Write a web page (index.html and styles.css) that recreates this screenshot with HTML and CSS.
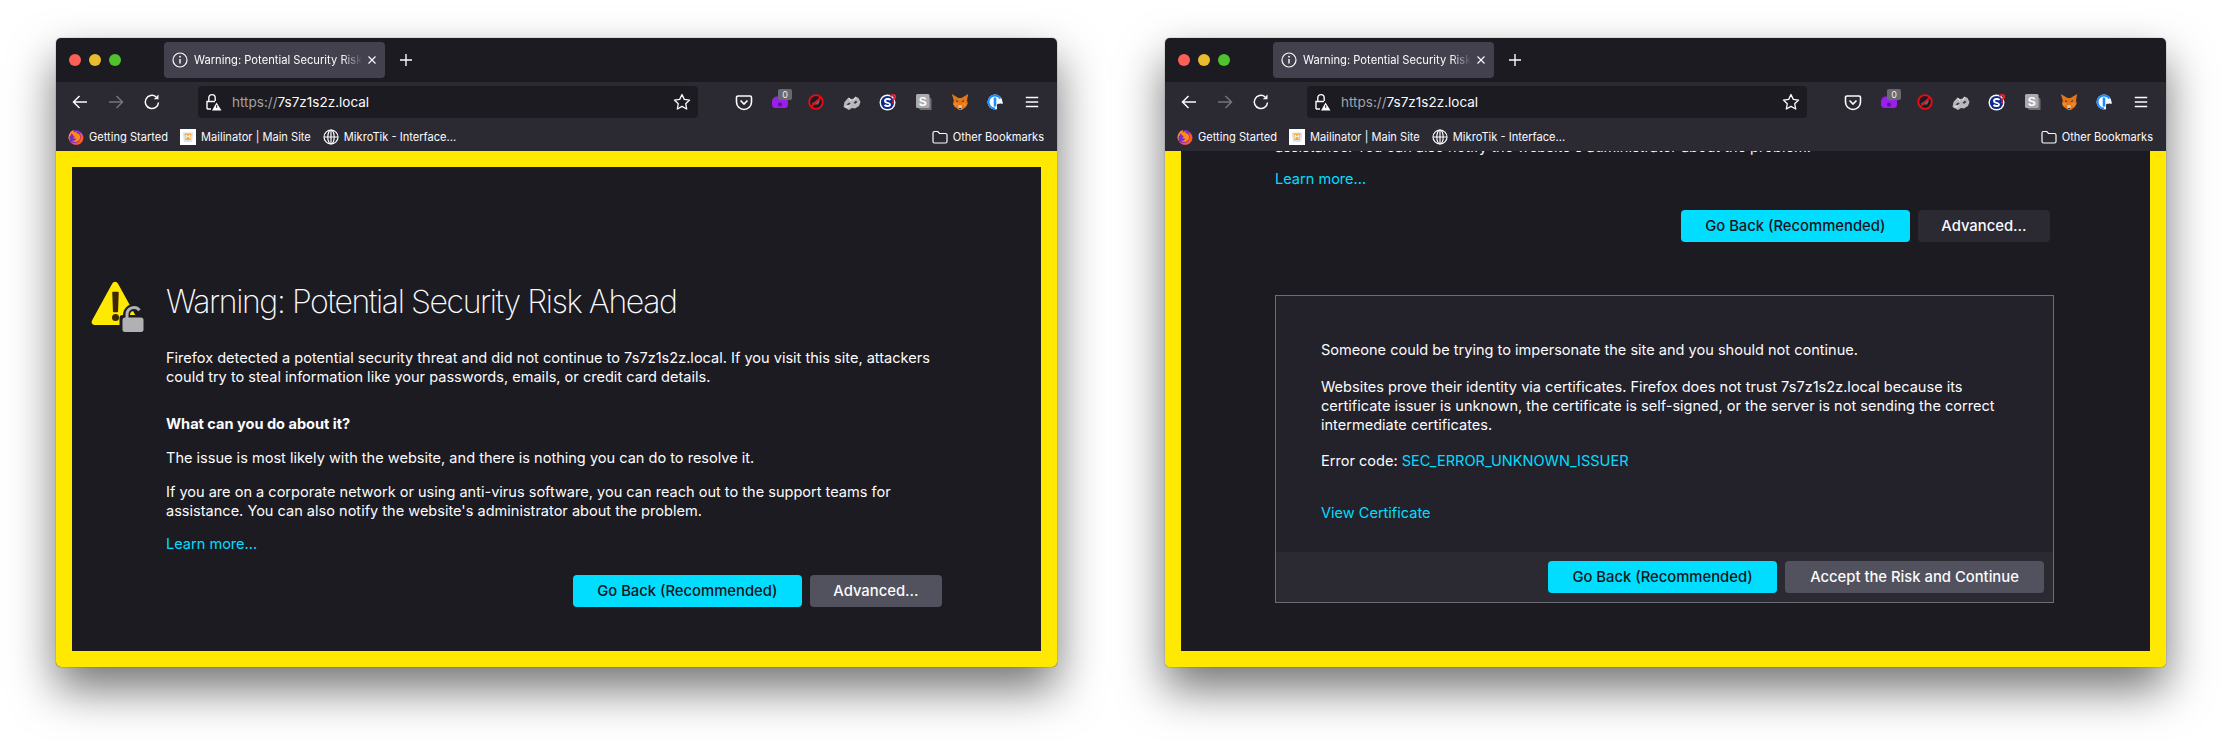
FILE: index.html
```html
<!DOCTYPE html>
<html lang="en">
<head>
    <meta charset="UTF-8">
    <title>Warning: Potential Security Risk Ahead</title>
    <link rel="stylesheet" href="styles.css">
</head>
<body>
<svg class="defs" width="0" height="0">
    <defs>
        <symbol id="i-firefox" viewBox="0 0 16 16">
            <circle cx="8" cy="8.4" r="7.4" fill="#7a2bc4"/>
            <path d="M1 7C1.5 3 4 1.2 6 1 5.5 2 5.6 2.8 6.2 3.3 7.500 2.400 9.500 2.200 11 3 9.800 2.600 8.500 3.100 8.200 4 11 4.200 12.800 6.500 12 9.500 11 13 6.500 14 3.800 11.800 6 12.400 8 11.200 8.300 9.300 7 10 5.500 9.600 5 8.300 5.800 8.700 6.800 8.500 7 7.800 6 7.400 5.200 7 5.500 6 4.500 5.800 4 5.200 4 4.200 3 4.800 2.800 5.500 2.800 6.500 2 7 1.500 7.500 1 7Z" fill="#ff8a16"/>
            <path d="M11 3C13.500 4 15.300 6.400 15.400 8.400 15.400 12.500 12.100 15.800 8 15.800 5.500 15.800 3 14.400 1.700 12.300 4 14.400 8 14.600 10.800 12.500 13 10.500 13.500 6.500 11 3Z" fill="#ff5a1f"/>
            <path d="M2 4.500C1 6 .5 7.500.6 9c.2 1.500.8 2.600 1.300 3.400C1 9.500 1.500 7 2 4.500Z" fill="#ffbd2e"/>
        </symbol>
        <symbol id="i-globe" viewBox="0 0 16 16" fill="none" stroke="#fbfbfe" stroke-width="1.200">
            <circle cx="8" cy="8" r="7"/>
            <ellipse cx="8" cy="8" rx="3.200" ry="7"/>
            <path d="M1 8h14M8 1v14"/>
        </symbol>
        <symbol id="i-mailinator" viewBox="0 0 16 16">
            <rect width="16" height="16" fill="#fff"/>
            <path d="M2.500 3.500h11l-1.500 9.500H4z" fill="#d9e7f0"/>
            <path d="M4.500 4.500h7l-1 6.500h-5z" fill="#f7a83e"/>
            <path d="M6.200 9.500V6l1.800 1.800L9.800 6v3.500" fill="none" stroke="#fff" stroke-width="1"/>
        </symbol>
    </defs>
</svg>

<div class="page">

    <div class="window">
        <div class="tabstrip">
            <div class="lights"><i class="light red"></i><i class="light amber"></i><i class="light green"></i></div>
            <div class="tab">
                <svg class="tab-info" viewBox="0 0 16 16" fill="none" stroke="#fbfbfe" stroke-width="1.200"><circle cx="8" cy="8" r="7"/><path d="M8 7v4.500" stroke-width="1.400"/><circle cx="8" cy="4.700" r=".9" fill="#fbfbfe" stroke="none"/></svg>
                <span class="tab-title">Warning: Potential Security Risk</span>
                <svg class="tab-close" viewBox="0 0 10 10" stroke="#fbfbfe" stroke-width="1.100"><path d="M1.500 1.500l7 7M8.500 1.500l-7 7"/></svg>
            </div>
            <svg class="new-tab" viewBox="0 0 14 14" stroke="#fbfbfe" stroke-width="1.400"><path d="M7 1v12M1 7h12"/></svg>
        </div>
        <div class="toolbar">
            <svg class="nav-btn" viewBox="0 0 18 18" fill="none" stroke="#fbfbfe" stroke-width="1.500"><path d="M16 9H2.500M8.500 3L2.500 9l6 6"/></svg>
            <svg class="nav-btn" viewBox="0 0 18 18" fill="none" stroke="#75747c" stroke-width="1.500"><path d="M2 9h13.500M9.500 3l6 6-6 6"/></svg>
            <svg class="nav-btn" viewBox="0 0 18 18" fill="none" stroke="#fbfbfe" stroke-width="1.500"><path d="M15.500 9.500A6.600 6.600 0 1 1 13 3.800"/><path d="M15.500 1.500v4.700h-4.700" fill="#fbfbfe" stroke="none"/></svg>
            <div class="urlbar">
                <svg class="url-lock" viewBox="0 0 18 18" fill="none" stroke="#fbfbfe" stroke-width="1.400"><path d="M3 16V8.500h8M4.800 8V4.800a3.200 3.200 0 0 1 6.400 0V8"/><path d="M3 16h4"/><path d="M12.500 9.500l5 8h-9.500z" fill="#fbfbfe" stroke="none"/><path d="M12.700 12v3" stroke="#2b2a33" stroke-width="1"/></svg>
                <span class="url-text"><span class="url-dim">https://</span>7s7z1s2z.local</span>
                <svg class="url-star" viewBox="0 0 18 18" fill="none" stroke="#fbfbfe" stroke-width="1.300" stroke-linejoin="round"><path d="M9 1.500l2.300 4.900 5.300.7-3.900 3.600 1 5.300L9 13.400 4.300 16l1-5.300L1.400 7.100l5.300-.7z"/></svg>
            </div>
            <div class="ext-row">
                <div class="ext"><svg viewBox="0 0 18 18"><path d="M3 3h12a1.500 1.500 0 0 1 1.500 1.500V9a7.500 7.500 0 0 1-15 0V4.500A1.500 1.500 0 0 1 3 3z" fill="none" stroke="#fbfbfe" stroke-width="1.600"/><path d="M5.500 7.500L9 11l3.500-3.500" fill="none" stroke="#fbfbfe" stroke-width="1.600"/></svg></div>
                <div class="ext"><svg viewBox="0 0 18 18"><path d="M1 8.500a5 5 0 0 1 5-5h7a4 4 0 0 1 4 4v4a3.500 3.500 0 0 1-3.500 3.500h-9A3.500 3.500 0 0 1 1 11.500z" fill="#9a1fe8"/><circle cx="9" cy="11.500" r="2" fill="#5d1296"/></svg><span class="ext-badge">0</span></div>
                <div class="ext"><svg viewBox="0 0 18 18"><circle cx="9" cy="9" r="6.800" fill="#1c1b22" stroke="#f00a16" stroke-width="1.800"/><path d="M5 10.500l6-4 2 1-2 4H6z" fill="#6a6a70"/><path d="M4.300 13.700l9.400-9.400" stroke="#f00a16" stroke-width="1.800"/></svg></div>
                <div class="ext"><svg viewBox="0 0 18 18"><path d="M.5 14L1.500 9l4-4.500 2.500 1.500 3-.5 1.500-2 3 1.500 2 4-1.500 4-4 2.500-3-.5-3 2z" fill="#b9b9bd"/><path d="M3.500 11.500l2.500-2 1.800.8-2.300 2zM10.500 9.500l2.500-2 1.500 1.500-2.500 2z" fill="#3f3f45"/><path d="M6 5l2 3M12.500 4l-2 3.500M2.500 14l4-1" stroke="#eeeef0" stroke-width=".9"/></svg></div>
                <div class="ext"><svg viewBox="0 0 18 18"><circle cx="8.500" cy="9.500" r="8" fill="#fbfbfe"/><circle cx="8.500" cy="9.500" r="6.600" fill="#0b2a8c"/><path d="M11.500 7C10.300 5.400 6 5.700 6 8c0 2.400 5 1.300 5 3.400 0 2-3.800 2.200-5.500.6" fill="none" stroke="#fbfbfe" stroke-width="1.900"/><path d="M11.500 3.500c.4-2 4.800-2 4.800.3 0 1.700-2.200 1.700-2.200 3.700" fill="none" stroke="#ef1d2d" stroke-width="1.900"/><circle cx="14" cy="9.500" r="1.100" fill="#ef1d2d"/></svg></div>
                <div class="ext"><svg viewBox="0 0 18 18"><path d="M2.500 3.500h11l3 2.500v11H5.500l-3-2.500z" fill="#6f6f74"/><rect x="1" y="1" width="13.500" height="14" rx="1.500" fill="#a9a9ae"/><text class="sbox-text" x="7.700" y="12.500">S</text></svg></div>
                <div class="ext"><svg viewBox="0 0 18 18"><path d="M.8 1l6.700 4h3l6.700-4-1.200 6.500.8 3-2 3.500-4 3H8l-4-3-2-3.500.8-3z" fill="#e2761b"/><path d="M2 11l3.500-2.500 2 2.500-2 1.500L4 14zM16 11l-3.500-2.500-2 2.500 2 1.500L14 14z" fill="#f6851b"/><path d="M5 6.500l2.500 2-2 1zM13 6.500l-2.500 2 2 1z" fill="#763d16"/><path d="M7.500 12h3l.5 2.500-2 1.500-2-1.500z" fill="#d7c1b3"/><path d="M8 15h2v1H8z" fill="#233447"/></svg></div>
                <div class="ext"><svg viewBox="0 0 18 18"><circle cx="8" cy="9" r="7.500" fill="#fbfbfe"/><path d="M8 2.500a6.500 6.500 0 0 0 0 13" fill="none" stroke="#1a8cff" stroke-width="2"/><path d="M8 2.500a6.500 6.500 0 0 1 5.500 3" fill="none" stroke="#1a8cff" stroke-width="2"/><rect x="6.700" y="4.500" width="2.600" height="9" rx=".6" fill="#1a8cff"/><rect x="10" y="10.500" width="7" height="6.500" rx="1.500" fill="#2b2a33"/><path d="M12 11V9.500a1.500 1.500 0 0 1 3 0V11" fill="none" stroke="#fbfbfe" stroke-width="1"/></svg></div>
                <div class="ext"><svg viewBox="0 0 18 18" stroke="#fbfbfe" stroke-width="1.500"><path d="M2.800 4.500h12.400M2.800 9h12.400M2.800 13.500h12.400"/></svg></div>
            </div>
        </div>
        <div class="bookmarks">
            <a class="bookmark"><svg class="bm-icon"><use href="#i-firefox"/></svg>Getting Started</a>
            <a class="bookmark"><svg class="bm-icon"><use href="#i-mailinator"/></svg>Mailinator | Main Site</a>
            <a class="bookmark"><svg class="bm-icon"><use href="#i-globe"/></svg>MikroTik - Interface...</a>
            <a class="bookmark other"><svg class="bm-folder" viewBox="0 0 16 14" fill="none" stroke="#fbfbfe" stroke-width="1.200"><path d="M1 3a1.500 1.500 0 0 1 1.500-1.500h3.300L7.500 3.500h6A1.500 1.500 0 0 1 15 5v6.500a1.500 1.500 0 0 1-1.500 1.500h-11A1.500 1.500 0 0 1 1 11.500z"/></svg>Other Bookmarks</a>
        </div>
        <div class="content">
            <div class="error-page">
                <svg class="warn-icon" viewBox="0 0 54 52">
                    <path d="M21 3c1.700-3 4.500-3 6.200 0l19.800 36c1.700 3-.2 5-3 5H4.500c-3 0-5-2-3.200-5z" fill="#ffe900"/>
                    <path d="M22 11.500h5l-.7 19h-3.600z" fill="#3e2800" stroke="#3e2800" stroke-linejoin="round" stroke-width="1.500"/>
                    <circle cx="24.500" cy="36.500" r="3.500" fill="#3e2800"/>
                    <path d="M35.500 38V34a7.500 7.500 0 0 1 15 0v4" fill="none" stroke="#1c1b22" stroke-width="7"/>
                    <rect x="28.500" y="34" width="25" height="18" rx="3" fill="#1c1b22"/>
                    <path d="M36 37v-3.500a7 7 0 0 1 12.500-4.300" fill="none" stroke="#b1b1b3" stroke-width="3"/>
                    <rect x="31.500" y="36.500" width="21" height="14.500" rx="2.500" fill="#b1b1b3"/>
                </svg>
                <div class="error-body">
                    <h1>Warning: Potential Security Risk Ahead</h1>
                    <p class="intro">Firefox detected a potential security threat and did not continue to 7s7z1s2z.local. If you visit this site, attackers<br>could try to steal information like your passwords, emails, or credit card details.</p>
                    <h2>What can you do about it?</h2>
                    <p>The issue is most likely with the website, and there is nothing you can do to resolve it.</p>
                    <p>If you are on a corporate network or using anti-virus software, you can reach out to the support teams for<br>assistance. You can also notify the website's administrator about the problem.</p>
                    <a class="link learn">Learn more...</a>
                    <div class="actions">
                        <button class="btn primary">Go Back (Recommended)</button>
                        <button class="btn">Advanced...</button>
                    </div>
                </div>
            </div>
        </div>
    </div>

    <div class="window">
        <div class="tabstrip">
            <div class="lights"><i class="light red"></i><i class="light amber"></i><i class="light green"></i></div>
            <div class="tab">
                <svg class="tab-info" viewBox="0 0 16 16" fill="none" stroke="#fbfbfe" stroke-width="1.200"><circle cx="8" cy="8" r="7"/><path d="M8 7v4.500" stroke-width="1.400"/><circle cx="8" cy="4.700" r=".9" fill="#fbfbfe" stroke="none"/></svg>
                <span class="tab-title">Warning: Potential Security Risk</span>
                <svg class="tab-close" viewBox="0 0 10 10" stroke="#fbfbfe" stroke-width="1.100"><path d="M1.500 1.500l7 7M8.500 1.500l-7 7"/></svg>
            </div>
            <svg class="new-tab" viewBox="0 0 14 14" stroke="#fbfbfe" stroke-width="1.400"><path d="M7 1v12M1 7h12"/></svg>
        </div>
        <div class="toolbar">
            <svg class="nav-btn" viewBox="0 0 18 18" fill="none" stroke="#fbfbfe" stroke-width="1.500"><path d="M16 9H2.500M8.500 3L2.500 9l6 6"/></svg>
            <svg class="nav-btn" viewBox="0 0 18 18" fill="none" stroke="#75747c" stroke-width="1.500"><path d="M2 9h13.500M9.500 3l6 6-6 6"/></svg>
            <svg class="nav-btn" viewBox="0 0 18 18" fill="none" stroke="#fbfbfe" stroke-width="1.500"><path d="M15.500 9.500A6.600 6.600 0 1 1 13 3.800"/><path d="M15.500 1.500v4.700h-4.700" fill="#fbfbfe" stroke="none"/></svg>
            <div class="urlbar">
                <svg class="url-lock" viewBox="0 0 18 18" fill="none" stroke="#fbfbfe" stroke-width="1.400"><path d="M3 16V8.500h8M4.800 8V4.800a3.200 3.200 0 0 1 6.400 0V8"/><path d="M3 16h4"/><path d="M12.500 9.500l5 8h-9.500z" fill="#fbfbfe" stroke="none"/><path d="M12.700 12v3" stroke="#2b2a33" stroke-width="1"/></svg>
                <span class="url-text"><span class="url-dim">https://</span>7s7z1s2z.local</span>
                <svg class="url-star" viewBox="0 0 18 18" fill="none" stroke="#fbfbfe" stroke-width="1.300" stroke-linejoin="round"><path d="M9 1.500l2.300 4.900 5.300.7-3.900 3.600 1 5.300L9 13.400 4.300 16l1-5.300L1.400 7.100l5.300-.7z"/></svg>
            </div>
            <div class="ext-row">
                <div class="ext"><svg viewBox="0 0 18 18"><path d="M3 3h12a1.500 1.500 0 0 1 1.500 1.500V9a7.500 7.500 0 0 1-15 0V4.500A1.500 1.500 0 0 1 3 3z" fill="none" stroke="#fbfbfe" stroke-width="1.600"/><path d="M5.500 7.500L9 11l3.500-3.500" fill="none" stroke="#fbfbfe" stroke-width="1.600"/></svg></div>
                <div class="ext"><svg viewBox="0 0 18 18"><path d="M1 8.500a5 5 0 0 1 5-5h7a4 4 0 0 1 4 4v4a3.500 3.500 0 0 1-3.500 3.500h-9A3.500 3.500 0 0 1 1 11.500z" fill="#9a1fe8"/><circle cx="9" cy="11.500" r="2" fill="#5d1296"/></svg><span class="ext-badge">0</span></div>
                <div class="ext"><svg viewBox="0 0 18 18"><circle cx="9" cy="9" r="6.800" fill="#1c1b22" stroke="#f00a16" stroke-width="1.800"/><path d="M5 10.500l6-4 2 1-2 4H6z" fill="#6a6a70"/><path d="M4.300 13.700l9.400-9.400" stroke="#f00a16" stroke-width="1.800"/></svg></div>
                <div class="ext"><svg viewBox="0 0 18 18"><path d="M.5 14L1.500 9l4-4.500 2.500 1.500 3-.5 1.500-2 3 1.500 2 4-1.500 4-4 2.500-3-.5-3 2z" fill="#b9b9bd"/><path d="M3.500 11.500l2.500-2 1.800.8-2.300 2zM10.500 9.500l2.500-2 1.500 1.500-2.500 2z" fill="#3f3f45"/><path d="M6 5l2 3M12.500 4l-2 3.500M2.500 14l4-1" stroke="#eeeef0" stroke-width=".9"/></svg></div>
                <div class="ext"><svg viewBox="0 0 18 18"><circle cx="8.500" cy="9.500" r="8" fill="#fbfbfe"/><circle cx="8.500" cy="9.500" r="6.600" fill="#0b2a8c"/><path d="M11.500 7C10.300 5.400 6 5.700 6 8c0 2.400 5 1.300 5 3.400 0 2-3.800 2.200-5.500.6" fill="none" stroke="#fbfbfe" stroke-width="1.900"/><path d="M11.500 3.500c.4-2 4.800-2 4.800.3 0 1.700-2.200 1.700-2.200 3.700" fill="none" stroke="#ef1d2d" stroke-width="1.900"/><circle cx="14" cy="9.500" r="1.100" fill="#ef1d2d"/></svg></div>
                <div class="ext"><svg viewBox="0 0 18 18"><path d="M2.500 3.500h11l3 2.500v11H5.500l-3-2.500z" fill="#6f6f74"/><rect x="1" y="1" width="13.500" height="14" rx="1.500" fill="#a9a9ae"/><text class="sbox-text" x="7.700" y="12.500">S</text></svg></div>
                <div class="ext"><svg viewBox="0 0 18 18"><path d="M.8 1l6.700 4h3l6.700-4-1.200 6.500.8 3-2 3.500-4 3H8l-4-3-2-3.500.8-3z" fill="#e2761b"/><path d="M2 11l3.500-2.500 2 2.500-2 1.500L4 14zM16 11l-3.500-2.500-2 2.500 2 1.500L14 14z" fill="#f6851b"/><path d="M5 6.500l2.500 2-2 1zM13 6.500l-2.500 2 2 1z" fill="#763d16"/><path d="M7.500 12h3l.5 2.500-2 1.500-2-1.500z" fill="#d7c1b3"/><path d="M8 15h2v1H8z" fill="#233447"/></svg></div>
                <div class="ext"><svg viewBox="0 0 18 18"><circle cx="8" cy="9" r="7.500" fill="#fbfbfe"/><path d="M8 2.500a6.500 6.500 0 0 0 0 13" fill="none" stroke="#1a8cff" stroke-width="2"/><path d="M8 2.500a6.500 6.500 0 0 1 5.500 3" fill="none" stroke="#1a8cff" stroke-width="2"/><rect x="6.700" y="4.500" width="2.600" height="9" rx=".6" fill="#1a8cff"/><rect x="10" y="10.500" width="7" height="6.500" rx="1.500" fill="#2b2a33"/><path d="M12 11V9.500a1.500 1.500 0 0 1 3 0V11" fill="none" stroke="#fbfbfe" stroke-width="1"/></svg></div>
                <div class="ext"><svg viewBox="0 0 18 18" stroke="#fbfbfe" stroke-width="1.500"><path d="M2.800 4.500h12.400M2.800 9h12.400M2.800 13.500h12.400"/></svg></div>
            </div>
        </div>
        <div class="bookmarks">
            <a class="bookmark"><svg class="bm-icon"><use href="#i-firefox"/></svg>Getting Started</a>
            <a class="bookmark"><svg class="bm-icon"><use href="#i-mailinator"/></svg>Mailinator | Main Site</a>
            <a class="bookmark"><svg class="bm-icon"><use href="#i-globe"/></svg>MikroTik - Interface...</a>
            <a class="bookmark other"><svg class="bm-folder" viewBox="0 0 16 14" fill="none" stroke="#fbfbfe" stroke-width="1.200"><path d="M1 3a1.500 1.500 0 0 1 1.500-1.500h3.300L7.500 3.500h6A1.500 1.500 0 0 1 15 5v6.500a1.500 1.500 0 0 1-1.500 1.500h-11A1.500 1.500 0 0 1 1 11.500z"/></svg>Other Bookmarks</a>
        </div>
        <div class="content scrolled">
            <div class="scrolled-body">
                <p>assistance. You can also notify the website's administrator about the problem.</p>
                <a class="link learn">Learn more...</a>
                <div class="actions">
                    <button class="btn primary">Go Back (Recommended)</button>
                    <button class="btn quiet">Advanced...</button>
                </div>
                <div class="advanced-panel">
                    <div class="panel-text">
                        <p>Someone could be trying to impersonate the site and you should not continue.</p>
                        <p>Websites prove their identity via certificates. Firefox does not trust 7s7z1s2z.local because its<br>certificate issuer is unknown, the certificate is self-signed, or the server is not sending the correct<br>intermediate certificates.</p>
                        <p>Error code: <a class="link">SEC_ERROR_UNKNOWN_ISSUER</a></p>
                        <a class="link view-cert">View Certificate</a>
                    </div>
                    <div class="panel-footer">
                        <button class="btn primary">Go Back (Recommended)</button>
                        <button class="btn accept">Accept the Risk and Continue</button>
                    </div>
                </div>
            </div>
        </div>
    </div>

</div>
</body>
</html>
```

FILE: styles.css
```css
* {
    margin: 0;
    padding: 0;
    box-sizing: border-box;
}
html, body {
    height: 100%;
    background: #fff;
    overflow: hidden;
}
body {
    font-family: Inter, "Liberation Sans", sans-serif;
    color: #fbfbfe;
}
.defs {
    position: absolute;
}
.page {
    display: flex;
    gap: 108px;
    padding: 38px 0 0 56px;
}

/* browser window */
.window {
    width: 1001px;
    height: 629px;
    display: flex;
    flex-direction: column;
    border-radius: 5px;
    overflow: hidden;
    flex: none;
    box-shadow: 0 22px 46px rgba(0, 0, 0, .55), 0 0 1px rgba(0, 0, 0, .8);
}

.tabstrip {
    height: 44px;
    background: #1c1b22;
    display: flex;
    align-items: center;
    flex: none;
}
.lights {
    display: flex;
    gap: 8px;
    width: 108px;
    padding-left: 13px;
}
.light {
    width: 12px;
    height: 12px;
    border-radius: 50%;
}
.red { background: #fe5f57; }
.amber { background: #e9bd2b; }
.green { background: #50c22e; }

.tab {
    width: 221px;
    height: 36px;
    background: #42414d;
    border-radius: 4px;
    display: flex;
    align-items: center;
    padding: 0 11px 0 8px;
}
.tab-info {
    width: 16px;
    height: 16px;
    flex: none;
    margin-right: 6px;
}
.tab-title {
    font-size: 11.200px;
    white-space: nowrap;
    flex: 1;
    -webkit-mask-image: linear-gradient(to right, #000 88%, transparent);
    mask-image: linear-gradient(to right, #000 88%, transparent);
}
.tab-close {
    width: 10px;
    height: 10px;
    flex: none;
    margin-left: 5px;
}
.new-tab {
    width: 14px;
    height: 14px;
    margin-left: 14px;
}

.toolbar {
    height: 40px;
    background: #2b2a33;
    display: flex;
    align-items: center;
    flex: none;
    padding-left: 15px;
}
.nav-btn {
    width: 18px;
    height: 18px;
    margin-right: 18px;
    flex: none;
}
.urlbar {
    width: 500px;
    height: 32px;
    margin-left: 19px;
    margin-right: 28px;
    background: #1c1b22;
    border-radius: 4px;
    display: flex;
    align-items: center;
    padding: 0 7px 0 6px;
    flex: none;
}
.url-lock {
    width: 18px;
    height: 18px;
    margin-right: 10px;
    flex: none;
}
.url-text {
    font-size: 13.500px;
    flex: 1;
}
.url-dim {
    color: #a3a2a8;
}
.url-star {
    width: 18px;
    height: 18px;
}
.ext-row {
    display: flex;
}
.ext {
    width: 36px;
    height: 20px;
    display: flex;
    justify-content: center;
    align-items: center;
    position: relative;
}
.ext svg {
    width: 18px;
    height: 18px;
}
.ext-badge {
    position: absolute;
    left: 16px;
    top: -3px;
    width: 14px;
    height: 11px;
    background: #6a6a6e;
    border-radius: 2px;
    font-size: 9px;
    line-height: 11px;
    text-align: center;
    color: #eee;
}
.sbox-text {
    font: bold 12px "Liberation Sans", sans-serif;
    fill: #fff;
    text-anchor: middle;
}

.bookmarks {
    height: 29px;
    background: #2b2a33;
    display: flex;
    align-items: center;
    padding: 0 13px 0 12px;
    font-size: 11.100px;
    flex: none;
}
.bookmark {
    display: flex;
    align-items: center;
    white-space: nowrap;
    margin-right: 12px;
}
.bm-icon {
    width: 16px;
    height: 16px;
    margin-right: 5px;
    flex: none;
}
.other {
    margin: 0 0 0 auto;
}
.bm-folder {
    width: 16px;
    height: 14px;
    margin-right: 5px;
}

/* page inside the window */
.content {
    flex: 1;
    background: #1c1b22;
    border: 16px solid #ffe900;
    overflow: hidden;
}
.content.scrolled {
    border-top: 0;
}
p {
    font-size: 14.550px;
    line-height: 18.700px;
    margin-bottom: 15px;
}
.error-page {
    display: flex;
    padding: 115px 0 0 19px;
}
.warn-icon {
    width: 54px;
    height: 52px;
    flex: none;
    margin-right: 21px;
    margin-top: -1px;
}
.error-body {
    width: 776px;
}
h1 {
    font-size: 32px;
    line-height: 40px;
    font-weight: 200;
    letter-spacing: -1.400px;
    margin-bottom: 27px;
    white-space: nowrap;
}
.intro {
    margin-bottom: 29px;
}
h2 {
    font-size: 14.550px;
    line-height: 18.700px;
    font-weight: 700;
    margin-bottom: 15px;
}
.link {
    color: #00ddff;
    font-size: 14.550px;
    line-height: 18.700px;
}
.learn {
    display: block;
}
.actions {
    display: flex;
    justify-content: flex-end;
    gap: 8px;
    margin-top: 21px;
}
.btn {
    height: 32px;
    padding: 0 23.500px;
    border: 0;
    border-radius: 4px;
    background: #52525e;
    color: #fbfbfe;
    font: 500 14.800px Inter, "Liberation Sans", sans-serif;
}
.btn.primary {
    background: #00ddff;
    color: #15141a;
    width: 229px;
    padding: 0;
}
.btn.quiet {
    background: #2b2a33;
}
.btn.accept {
    width: 259px;
    padding: 0;
}

/* second window is scrolled down to the advanced panel */
.scrolled-body {
    margin-top: -13px;
    padding-left: 94px;
    width: 873px;
}
.scrolled-body p {
    margin-bottom: 13px;
}
.scrolled-body .actions {
    width: 775px;
    margin-top: 22px;
}
.advanced-panel {
    width: 779px;
    height: 308px;
    margin-top: 53px;
    background: #23222b;
    border: 1px solid #6e6d76;
    display: flex;
    flex-direction: column;
}
.panel-text {
    flex: 1;
    padding: 45px 45px 0;
}
.scrolled-body .panel-text p {
    margin-bottom: 18px;
}
.view-cert {
    display: block;
    margin-top: 33px;
}
.panel-footer {
    height: 50px;
    background: #2b2a33;
    display: flex;
    justify-content: flex-end;
    align-items: center;
    gap: 8px;
    padding-right: 9px;
}
```
